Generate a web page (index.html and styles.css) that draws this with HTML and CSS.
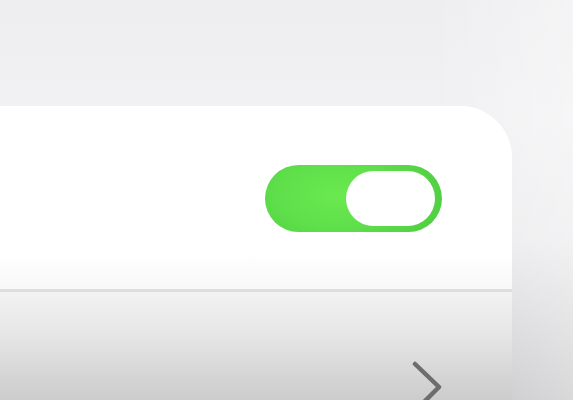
FILE: index.html
```html
<!DOCTYPE html>
<html>
<head>
<meta charset="utf-8">
<link rel="stylesheet" href="styles.css">
</head>
<body>
<div class="screen">
  <div class="card">
    <div class="row row-top">
      <div class="toggle" role="switch" aria-checked="true">
        <div class="knob"></div>
      </div>
    </div>
    <div class="divider"></div>
    <div class="row row-bottom">
      <svg class="chevron" width="40" height="60" viewBox="0 0 40 60">
        <path d="M4 4 L28 27 L5 50" fill="none" stroke="#6d6d6d" stroke-width="4.5" stroke-linecap="round" stroke-linejoin="round"/>
      </svg>
    </div>
  </div>
</div>
</body>
</html>
```

FILE: styles.css
```css
html, body {
  margin: 0;
  padding: 0;
  font-family: "Liberation Sans", Arial, sans-serif;
}
.screen {
  width: 573px;
  height: 400px;
  overflow: hidden;
  background:
    linear-gradient(to right, rgba(255,255,255,0) 0%, rgba(255,255,255,0) 75%, rgba(255,255,255,0.35) 100%),
    linear-gradient(to bottom, #eeeef0 0%, #f1f1f3 30%, #ebebed 60%, #d8d8da 80%, #c4c4c6 100%);
  padding-top: 106px;
  box-sizing: border-box;
}
.card {
  width: 512px;
  background: #ffffff;
  border-top-right-radius: 52px;
  overflow: hidden;
}
.row-top {
  height: 183px;
  box-sizing: border-box;
  padding: 59px 0 0 265px;
  background: linear-gradient(to bottom, #ffffff 0%, #ffffff 80%, #f8f8f8 100%);
}
.toggle {
  width: 177px;
  height: 67px;
  border-radius: 34px;
  background: radial-gradient(ellipse 60% 90% at 40% 45%, #6ae94f 0%, #5fdf4a 55%, #52d043 100%);
  box-sizing: border-box;
  padding: 6px 7px 6px 81px;
}
.knob {
  width: 89px;
  height: 55px;
  border-radius: 28px;
  background: #ffffff;
}
.divider {
  height: 3px;
  background: #dedede;
}
.row-bottom {
  height: 120px;
  box-sizing: border-box;
  padding: 68px 0 0 411px;
  background: linear-gradient(to bottom, #f2f2f2 0%, #e6e6e6 35%, #d5d5d5 70%, #c8c8c8 100%);
}
.chevron {
  display: block;
}
```
